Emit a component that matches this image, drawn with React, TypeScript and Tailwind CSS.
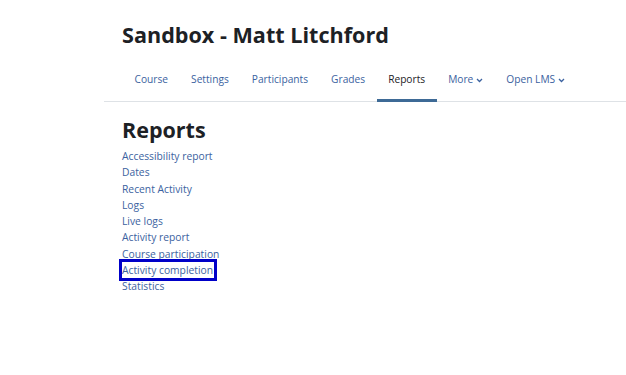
import React from 'react';

const navItems = ['Course', 'Settings', 'Participants', 'Grades', 'Reports', 'More', 'Open LMS'];
const links = [
  'Accessibility report',
  'Dates',
  'Recent Activity',
  'Logs',
  'Live logs',
  'Activity report',
  'Course participation',
  'Activity completion',
  'Statistics',
];

const Chevron: React.FC = () => (
  <svg width="7" height="5" viewBox="0 0 7 5" className="ml-[3px] mt-[1px]">
    <path d="M1 1l2.5 2.5L6 1" fill="none" stroke="currentColor" strokeWidth="1.3" />
  </svg>
);

const App: React.FC = () => {
  return (
    <div className="w-[626px] h-[375px] bg-white overflow-hidden" style={{ fontFamily: '"Open Sans", sans-serif' }}>
      <div className="ml-[104px]">
        <div className="pl-[18px] pt-[20px]">
          <h1 className="text-[21.6px] leading-[30px] font-bold text-[#1d2125]">Sandbox - Matt Litchford</h1>
        </div>
        <nav className="flex pl-[1px] mt-[13px] ml-[18px] h-[39px]">
          {navItems.map(item => {
            const active = item === 'Reports';
            const dropdown = item === 'More' || item === 'Open LMS';
            return (
              <div
                key={item}
                className={`flex items-center px-[11.5px] pb-[2px] text-[10.2px] border-b-[3px] ${active ? 'border-[#3e6a96] text-[#1d2125]' : 'border-transparent text-[#3b62a0]'}`}
              >
                {item}
                {dropdown && <Chevron />}
              </div>
            );
          })}
        </nav>
        <div className="h-px bg-[#dee2e6] -mt-[1px]" />
        <div className="pl-[18px] pt-[14px]">
          <h2 className="text-[21.5px] leading-[28px] font-bold text-[#1d2125]">Reports</h2>
          <ul className="mt-[4px]">
            {links.map(link => (
              <li key={link} className="h-[16.25px] leading-[16.25px] text-[10.3px] text-[#3b62a0]">
                {link === 'Activity completion' ? (
                  <span className="relative inline-block align-top">
                    {link}
                    <span className="absolute -left-[3px] -right-[4px] -top-[3px] -bottom-[3px] border-[3px] border-[#0000c8]" />
                  </span>
                ) : (
                  link
                )}
              </li>
            ))}
          </ul>
        </div>
      </div>
    </div>
  );
};

export default App;
